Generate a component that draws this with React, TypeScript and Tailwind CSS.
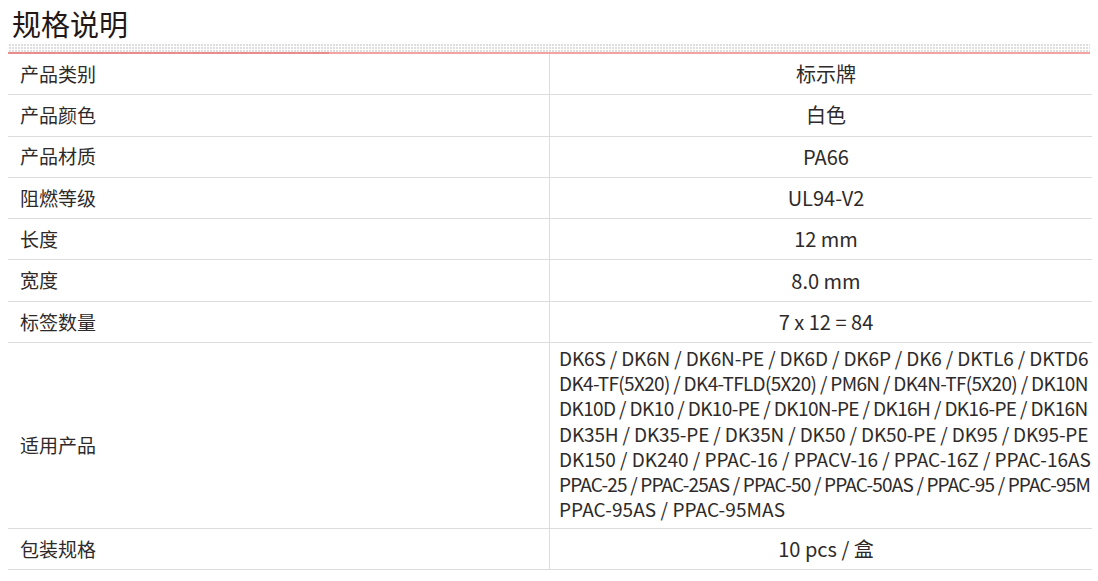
const rows: { label: string; value: string }[] = [
  { label: "产品类别", value: "标示牌" },
  { label: "产品颜色", value: "白色" },
  { label: "产品材质", value: "PA66" },
  { label: "阻燃等级", value: "UL94-V2" },
  { label: "长度", value: "12 mm" },
  { label: "宽度", value: "8.0 mm" },
  { label: "标签数量", value: "7 x 12 = 84" },
];

// each line is fitted to the cell width with its own tracking
const products = [
  { text: "DK6S / DK6N / DK6N-PE / DK6D / DK6P / DK6 / DKTL6 / DKTD6", cls: "tracking-[-0.15px]" },
  { text: "DK4-TF(5X20) / DK4-TFLD(5X20) / PM6N / DK4N-TF(5X20) / DK10N", cls: "tracking-[-0.67px]" },
  { text: "DK10D / DK10 / DK10-PE / DK10N-PE / DK16H / DK16-PE / DK16N", cls: "tracking-[-0.61px]" },
  { text: "DK35H / DK35-PE / DK35N / DK50 / DK50-PE / DK95 / DK95-PE", cls: "tracking-[-0.15px]" },
  { text: "DK150 / DK240 / PPAC-16 / PPACV-16 / PPAC-16Z / PPAC-16AS", cls: "tracking-[-0.03px]" },
  { text: "PPAC-25 / PPAC-25AS / PPAC-50 / PPAC-50AS / PPAC-95 / PPAC-95M", cls: "tracking-[-0.83px]" },
  { text: "PPAC-95AS / PPAC-95MAS", cls: "tracking-[0.08px]" },
];

const Row = ({ label, value }: { label: string; value: string }) => (
  <div className="flex h-[41.3px] border-b border-[#dcdcdc]">
    <div className="w-[542px] shrink-0 flex items-center pl-[12px] text-[19px] border-r border-[#dcdcdc]">{label}</div>
    <div className="flex-1 min-w-0 flex items-center justify-center pl-[10px] text-[20px]">{value}</div>
  </div>
);

const App = () => {
  return (
    <div
      className="w-[1098px] h-[581px] bg-white overflow-hidden text-[#2e2a2a]"
      style={{ fontFamily: '"Noto Sans CJK SC", "Noto Sans", sans-serif' }}
    >
      <h2 className="pl-[12px] pt-[4px] h-[43px] text-[29px] leading-[38px] text-[#231815]">规格说明</h2>

      {/* dotted band + red rule */}
      <div className="mx-[8px] h-[9px] bg-[#dedede] bg-[image:linear-gradient(90deg,#fff_1px,transparent_1px),linear-gradient(#fff_1px,transparent_1px)] bg-[length:3px_3px]"></div>
      <div className="mx-[8px] flex h-[2px]">
        <div className="w-[321px] bg-[#e98c8c]"></div>
        <div className="flex-1 bg-[#f4a3a3]"></div>
      </div>

      <div className="mx-[8px] w-[1084px]">
        {rows.map((r) => (
          <Row key={r.label} label={r.label} value={r.value} />
        ))}

        <div className="flex h-[186px] border-b border-[#dcdcdc]">
          <div className="w-[542px] shrink-0 flex items-center pl-[12px] pt-[19px] text-[19px] border-r border-[#dcdcdc]">适用产品</div>
          <div className="flex-1 min-w-0 pl-[9px] pt-[2px] text-[19px] leading-[25.2px]">
            {products.map((p) => (
              <div key={p.text} className={`whitespace-nowrap ${p.cls}`}>{p.text}</div>
            ))}
          </div>
        </div>

        <Row label="包装规格" value="10 pcs / 盒" />
      </div>
    </div>
  );
};

export default App;
